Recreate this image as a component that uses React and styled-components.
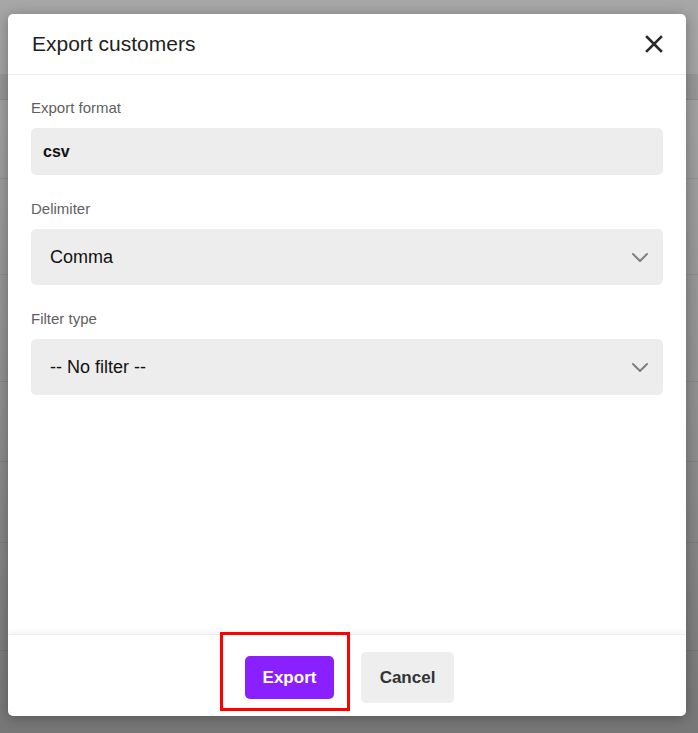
import React from "react";
import styled, { createGlobalStyle } from "styled-components";

const GlobalStyle = createGlobalStyle`
  html, body {
    margin: 0;
    padding: 0;
    height: 100%;
  }
  body {
    font-family: "Liberation Sans", Arial, sans-serif;
    overflow: hidden;
  }
`;

const Backdrop = styled.div`
  position: relative;
  width: 100%;
  height: 733px;
  background: linear-gradient(#a7a7a7, #8f8f8f 55%, #777777);
  display: flex;
  flex-direction: column;
`;

const BackRow = styled.div`
  height: ${(p) => p.h}px;
  flex-shrink: 0;
  border-bottom: 1px solid rgba(0, 0, 0, 0.07);
  background: ${(p) => (p.shade ? "rgba(0, 0, 0, 0.07)" : "transparent")};
`;

const Modal = styled.div`
  position: absolute;
  top: 14px;
  left: 8px;
  width: 678px;
  height: 702px;
  background: #fff;
  border-radius: 5px;
  box-shadow: 0 2px 14px rgba(0, 0, 0, 0.3);
  display: flex;
  flex-direction: column;
  overflow: hidden;
`;

const Header = styled.div`
  height: 60px;
  flex-shrink: 0;
  display: flex;
  align-items: center;
  justify-content: space-between;
  padding: 0 22px 0 24px;
  border-bottom: 1px solid #ececec;
`;

const Title = styled.h2`
  margin: 0;
  font-size: 21px;
  font-weight: normal;
  color: #222;
`;

const CloseButton = styled.button`
  border: none;
  background: none;
  padding: 0;
  width: 20px;
  height: 20px;
  display: flex;
  align-items: center;
  justify-content: center;
  cursor: pointer;
`;

const Body = styled.div`
  flex: 1;
  padding: 24px 23px 0;
`;

const Group = styled.div`
  margin-bottom: 25px;
`;

const Label = styled.label`
  display: block;
  font-size: 15px;
  line-height: 17px;
  color: #5f5f5f;
  margin-bottom: 12px;
`;

const Field = styled.div`
  height: ${(p) => p.h}px;
  box-sizing: border-box;
  border-radius: 5px;
  background: #ededed;
  display: flex;
  align-items: center;
  justify-content: space-between;
  padding: 0 15px 0 ${(p) => p.pl}px;
  color: #111;
  font-size: ${(p) => (p.strong ? "16px" : "18px")};
  font-weight: ${(p) => (p.strong ? "bold" : "normal")};
`;

const Footer = styled.div`
  height: 82px;
  flex-shrink: 0;
  box-sizing: border-box;
  border-top: 1px solid #eeeeee;
  box-shadow: 0 -3px 5px rgba(0, 0, 0, 0.04);
  display: flex;
  align-items: center;
  justify-content: center;
  gap: 27px;
  padding: 4px 0 0 5px;
`;

const Highlight = styled.div`
  position: relative;
  display: flex;
`;

const Frame = styled.span`
  position: absolute;
  left: -25px;
  right: -16px;
  top: -24px;
  bottom: -12px;
  border: 3px solid #ff0000;
  pointer-events: none;
`;

const Button = styled.button`
  height: ${(p) => (p.primary ? 43 : 51)}px;
  width: ${(p) => (p.primary ? 89 : 93)}px;
  border: none;
  border-radius: 5px;
  font-family: "Liberation Sans", Arial, sans-serif;
  font-size: 17px;
  font-weight: bold;
  background: ${(p) => (p.primary ? "#8a1fff" : "#eeeeee")};
  color: ${(p) => (p.primary ? "#ffffff" : "#333333")};
  cursor: pointer;
`;

const Chevron = () => (
  <svg width="16" height="9" viewBox="0 0 16 9" fill="none">
    <path d="M1 1l7 7 7-7" stroke="#7a7a7a" strokeWidth="1.8" strokeLinecap="round" strokeLinejoin="round" />
  </svg>
);

const rows = [
  { h: 74 },
  { h: 24, shade: true },
  { h: 78 },
  { h: 95 },
  { h: 106 },
  { h: 79 },
  { h: 80 },
  { h: 107 },
  { h: 84 },
];

export default function App() {
  return (
    <>
      <GlobalStyle />
      <Backdrop>
        {rows.map((r, i) => (
          <BackRow key={i} h={r.h} shade={r.shade} />
        ))}
        <Modal>
          <Header>
            <Title>Export customers</Title>
            <CloseButton aria-label="Close">
              <svg width="18" height="18" viewBox="0 0 18 18">
                <path d="M2 2l14 14M16 2L2 16" stroke="#2b2b2b" strokeWidth="2.6" strokeLinecap="square" />
              </svg>
            </CloseButton>
          </Header>
          <Body>
            <Group>
              <Label>Export format</Label>
              <Field h={47} pl={12} strong>
                csv
              </Field>
            </Group>
            <Group>
              <Label>Delimiter</Label>
              <Field h={56} pl={19}>
                Comma
                <Chevron />
              </Field>
            </Group>
            <Group>
              <Label>Filter type</Label>
              <Field h={56} pl={19}>
                -- No filter --
                <Chevron />
              </Field>
            </Group>
          </Body>
          <Footer>
            <Highlight>
              <Frame />
              <Button primary>Export</Button>
            </Highlight>
            <Button>Cancel</Button>
          </Footer>
        </Modal>
      </Backdrop>
    </>
  );
}
